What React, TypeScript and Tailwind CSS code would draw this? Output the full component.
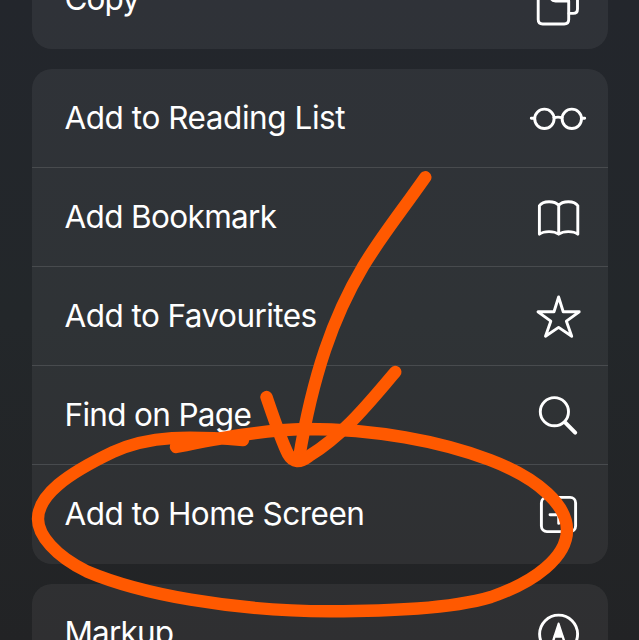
import type { ReactNode } from "react";

const icons: Record<string, ReactNode> = {
  copy: (
    <>
      <path d="M40.7 32V50.5Q40.7 55 36.2 55H14.7Q10.2 55 10.2 50.5V8Q10.2 4 14 4H23V27.5Q23 32 27.5 32H40.5" />
      <path d="M40.5 32Q40.5 30 39 28.5M41 44.4H45.2Q49.5 44.4 49.5 40V20" />
    </>
  ),
  glasses: (
    <>
      <circle cx="16.4" cy="30.8" r="9.7" />
      <circle cx="43.8" cy="30.8" r="9.7" />
      <path d="M3.3 30.3H6.5M53.7 30.3H56.7M26 29.7Q30 28.5 34 29.7" />
    </>
  ),
  book: (
    <path d="M30.7 18.5C27 13.5 15 13.2 11.4 18.8V47.2C16 43.7 26 43.7 30.7 47.2C35.4 43.7 45.4 43.7 49.8 47.2V18.8C46.4 13.2 34.4 13.5 30.7 18.5V47" />
  ),
  star: (
    <path d="M30.6 11L35.2 25.8H51.2L38.4 35.2L43.7 50.3L30.6 41.4L17.5 50.3L22.8 35.2L10 25.8H26Z" />
  ),
  search: (
    <>
      <circle cx="26.4" cy="26.7" r="14.1" />
      <path d="M37.3 37.7L47.2 47.7" strokeWidth="4" />
    </>
  ),
  plus: (
    <>
      <rect x="13.4" y="13.4" width="34.2" height="34.2" rx="5.5" />
      <path d="M22 30.7H39.4M30.7 22V39.4" />
    </>
  ),
  markup: (
    <>
      <circle cx="30.6" cy="31.1" r="19" />
      <path d="M30.6 20.5L26.7 32.5H34.5Z" fill="white" strokeWidth="2" />
      <path d="M26.5 33.5H34.7L38 44M26.5 33.5L23.5 44" strokeWidth="2.4" />
    </>
  ),
};

function Row({ label, icon, tracking }: { label: string; icon: string; tracking: string }) {
  return (
    <div className="flex h-[99px] shrink-0 items-center justify-between border-b border-[#484b4e] pr-5 pl-[32.5px] last:border-transparent">
      <span className={`text-[31.5px] leading-[40px] whitespace-nowrap text-white ${tracking}`}>{label}</span>
      <svg
        className="size-[60px]"
        viewBox="0 0 60 60"
        fill="none"
        stroke="white"
        strokeWidth="2.9"
        strokeLinecap="round"
        strokeLinejoin="round"
      >
        {icons[icon]}
      </svg>
    </div>
  );
}

function Card({ children }: { children: ReactNode }) {
  return <div className="flex shrink-0 flex-col rounded-[20px] bg-white/[0.058]">{children}</div>;
}

export default function App() {
  return (
    <div className="relative h-[640px] w-[639px] overflow-hidden bg-linear-to-b from-[#23262c] via-[#23272a] to-[#222325] font-[Inter,'Liberation_Sans',sans-serif]">
      <div className="-mt-[50px] flex flex-col gap-5 pr-[31px] pl-8">
        <Card>
          <Row label="Copy" icon="copy" tracking="tracking-[-0.9px]" />
        </Card>
        <Card>
          <Row label="Add to Reading List" icon="glasses" tracking="tracking-[-0.45px]" />
          <Row label="Add Bookmark" icon="book" tracking="tracking-[-0.65px]" />
          <Row label="Add to Favourites" icon="star" tracking="tracking-[-0.55px]" />
          <Row label="Find on Page" icon="search" tracking="tracking-[-0.68px]" />
          <Row label="Add to Home Screen" icon="plus" tracking="tracking-[-0.5px]" />
        </Card>
        <Card>
          <Row label="Markup" icon="markup" tracking="tracking-[-0.85px]" />
        </Card>
      </div>
      <svg
        className="absolute inset-0"
        width="639"
        height="640"
        fill="none"
        stroke="#ff5900"
        strokeWidth="12.4"
        strokeLinecap="round"
        strokeLinejoin="round"
      >
        <path d="M176 447C220 438 262 430 306 429C375 429 440 441 490 460C540 479 567 506 567 530C567 557 535 582 491 597C450 609 390 611 330 611.3C230 611 140 594 87 571.5C55 556 38 535 38 519C38 495 67 474 113 452C150 435 190 436 243 440" />
        <path d="M425.3 177.3C401 212 380 238 363 266.7C333 317 313 375 299 458" />
        <path d="M266.5 397C272 413 281 440 288 454C293 463 300 463 309 456C345 434 372 399 395.3 372" />
      </svg>
    </div>
  );
}
